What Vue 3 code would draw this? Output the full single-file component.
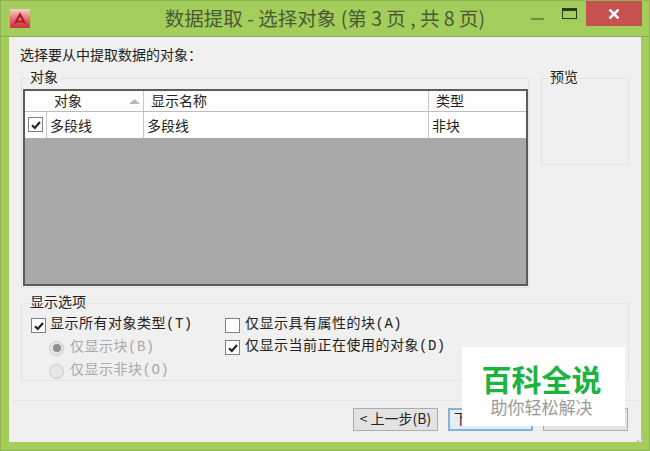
<template>
  <div class="window">
    <header class="titlebar">
      <svg class="app-icon" width="20" height="19" viewBox="0 0 20 19">
        <defs>
          <linearGradient id="iconFill" x1="0" y1="0" x2="0" y2="1">
            <stop offset="0" stop-color="#f4d6c8" />
            <stop offset="0.55" stop-color="#e2696a" />
            <stop offset="1" stop-color="#c9343c" />
          </linearGradient>
        </defs>
        <rect width="20" height="19" fill="url(#iconFill)" />
        <path d="M10 3 L17 16 L12.8 13.4 L7.2 13.4 L3 16 Z" fill="#b81c28" />
        <path d="M10 8 L11.8 11.6 L8.2 11.6 Z" fill="#e88a88" />
      </svg>
      <h1 class="title">数据提取 - 选择对象 (第 3 页 , 共 8 页)</h1>
      <div class="controls">
        <span class="ctl-min"></span>
        <span class="ctl-max"></span>
        <span class="ctl-close">
          <svg width="12" height="10" viewBox="0 0 12 10">
            <path d="M1.5 0.5 L10.5 9.5 M10.5 0.5 L1.5 9.5" stroke="#fff" stroke-width="2.5" fill="none" />
          </svg>
        </span>
      </div>
    </header>

    <main class="client">
      <p class="prompt">选择要从中提取数据的对象：</p>

      <div class="top-row">
        <section class="group objects">
          <div class="group-title">对象</div>
          <div class="table">
            <div class="cell head"></div>
            <div class="cell head indent">
              对象
              <svg class="sort" width="11" height="5" viewBox="0 0 11 5"><path d="M5.5 0 L11 5 L0 5 Z" fill="#b5b9bd" /></svg>
            </div>
            <div class="cell head name">显示名称</div>
            <div class="cell head type">类型</div>

            <div class="cell row check-cell">
              <span class="check"><svg width="12" height="12" viewBox="0 0 12 12"><path :d="tick" class="tick" /></svg></span>
            </div>
            <div class="cell row">多段线</div>
            <div class="cell row">多段线</div>
            <div class="cell row">非块</div>
          </div>
        </section>

        <section class="group preview">
          <div class="group-title">预览</div>
        </section>
      </div>

      <section class="group options">
        <div class="group-title">显示选项</div>
        <div class="option-cols">
          <div class="col-left">
            <label class="opt">
              <span class="check"><svg width="12" height="12" viewBox="0 0 12 12"><path :d="tick" class="tick" /></svg></span>
              显示所有对象类型(T)
            </label>
            <label class="opt sub disabled">
              <span class="radio on"></span>
              仅显示块(B)
            </label>
            <label class="opt sub disabled">
              <span class="radio"></span>
              仅显示非块(O)
            </label>
          </div>
          <div class="col-right">
            <label class="opt">
              <span class="check"></span>
              仅显示具有属性的块(A)
            </label>
            <label class="opt">
              <span class="check"><svg width="12" height="12" viewBox="0 0 12 12"><path :d="tick" class="tick" /></svg></span>
              仅显示当前正在使用的对象(D)
            </label>
          </div>
        </div>
      </section>

      <footer class="footer">
        <button class="btn">&lt; 上一步(B)</button>
        <button class="btn primary">下一步</button>
        <button class="btn"></button>
      </footer>
    </main>

    <svg class="grip" width="6" height="6" viewBox="0 0 6 6">
      <path d="M4 0h2v2H4zM4 4h2v2H4zM0 4h2v2H0z" fill="#c4c4c4" />
    </svg>

    <div class="watermark">
      <div class="wm-big">百科全说</div>
      <div class="wm-small">助你轻松解决</div>
    </div>
  </div>
</template>

<script setup>
const tick = 'M2 6.2 L4.8 9 L10 3'
</script>

<style>
html, body { margin: 0; overflow: hidden; }
</style>

<style scoped>
.window {
  position: relative;
  width: 650px;
  height: 451px;
  box-sizing: border-box;
  display: flex;
  flex-direction: column;
  background: #a3ce5b;
  border: 1px solid #8fb552;
  font-family: "Noto Sans CJK SC", "Liberation Sans", sans-serif;
  font-size: 14px;
  line-height: 16px;
  color: #222;
}
.titlebar {
  height: 35px;
  flex: none;
  display: grid;
  grid-template-columns: 1fr auto 1fr;
  align-items: start;
  border-bottom: 1px solid #8aab55;
  box-sizing: content-box;
}
.app-icon { margin: 8px 0 0 9px; }
.title {
  margin: 0;
  padding-top: 4px;
  font-size: 19.5px;
  line-height: 26px;
  font-weight: 400;
  color: #4a5a35;
  white-space: nowrap;
}
.controls { display: flex; justify-content: flex-end; align-items: flex-start; padding-right: 7px; }
.ctl-min { width: 13px; height: 2px; background: #6f8a4c; margin: 17px 18px 0 0; }
.ctl-max { width: 15px; height: 11px; box-sizing: border-box; border: 1px solid #2f3a24; border-top-width: 3px; margin: 7px 9px 0 0; }
.ctl-close {
  width: 56px;
  height: 25px;
  background: #c75050;
  display: flex;
  align-items: center;
  justify-content: center;
}
.client {
  flex: 1;
  margin: 0 8px 8px;
  padding: 9px 12px 0;
  background: #f0f0f0;
  display: flex;
  flex-direction: column;
  min-height: 0;
}
.prompt { margin: 0 0 0 -1px; height: 16px; }
.top-row { display: flex; gap: 12px; margin-top: 16px; align-items: flex-start; }
.group { border: 1px solid #e4e4e4; box-sizing: border-box; }
.group-title {
  width: fit-content;
  height: 16px;
  margin: -11px 0 0 7px;
  padding: 0 1px;
  background: #f0f0f0;
}
.objects { width: 508px; height: 210px; }
.preview { width: 88px; height: 87px; }
.table {
  margin: 5px 0 0 1px;
  width: 505px;
  height: 197px;
  box-sizing: border-box;
  border: 2px solid #5c5c5c;
  background: #a9a9a9;
  display: grid;
  grid-template-columns: 21px 97px 285px 1fr;
  grid-template-rows: 21px 26px;
  align-content: start;
}
.cell { display: flex; align-items: center; background: #fff; padding-left: 3px; border-left: 1px solid #c8c8c8; box-sizing: border-box; }
.cell:first-child, .check-cell { border-left: 0; }
.head { border-bottom: 1px solid #bdbdbd; background: #fdfdfd; padding-bottom: 2px; }
.row { padding-bottom: 1px; }
.indent { padding-left: 8px; position: relative; border-left: 0; }
.sort { position: absolute; right: 3px; top: 8px; }
.name { padding-left: 7px; }
.type { padding-left: 7px; }
.check-cell { padding-left: 3px; }
.check {
  width: 15px;
  height: 15px;
  flex: none;
  box-sizing: border-box;
  border: 1px solid #808080;
  background: #fff;
  display: inline-flex;
  align-items: center;
  justify-content: center;
}
.tick { fill: none; stroke: #222; stroke-width: 2.2; }
.options { height: 78px; margin-top: 15px; width: 608px; }
.option-cols { display: flex; padding: 4px 0 0 9px; }
.col-left { width: 194px; }
.opt {
  display: flex;
  align-items: center;
  gap: 4px;
  height: 22px;
  font-family: "Liberation Mono", "Noto Sans CJK SC", monospace;
  letter-spacing: 0.5px;
  white-space: nowrap;
}
.col-right .opt { gap: 5px; }
.opt .check, .opt .radio { margin-top: 3px; }
.sub { padding-left: 18px; height: 23px; gap: 6px; }
.disabled { color: #a8a8a8; }
.radio {
  width: 15px;
  height: 15px;
  box-sizing: border-box;
  flex: none;
  border-radius: 50%;
  border: 1px solid #c8c8c8;
  background: #e6e6e6;
  display: flex;
  align-items: center;
  justify-content: center;
}
.radio.on::after { content: ""; width: 8px; height: 8px; border-radius: 50%; background: #8e8e8e; }
.footer {
  margin: 19px -9px 0;
  padding: 7px 10px 0 0;
  border-top: 1px solid #e4e4e4;
  display: flex;
  justify-content: flex-end;
  gap: 10px;
}
.btn {
  width: 85px;
  height: 23px;
  padding: 0 0 3px;
  box-sizing: border-box;
  font: inherit;
  color: #222;
  background: #e3e3e3;
  border: 1px solid #adadad;
  white-space: nowrap;
}
.primary { border: 2px solid #7fb4de; background: #e6eef5; text-align: left; padding-left: 4px; }
.grip { position: absolute; right: 6px; bottom: 8px; }
.watermark {
  position: absolute;
  left: 461px;
  top: 346px;
  width: 163px;
  height: 79px;
  box-sizing: border-box;
  padding-right: 4px;
  background: #fff;
  text-align: center;
}
.wm-big { font-size: 30px; line-height: 36px; margin-top: 13px; font-weight: 700; color: #1cb33f; }
.wm-small { font-size: 17px; line-height: 20px; margin-top: 1px; color: #9a9a9a; }
</style>
